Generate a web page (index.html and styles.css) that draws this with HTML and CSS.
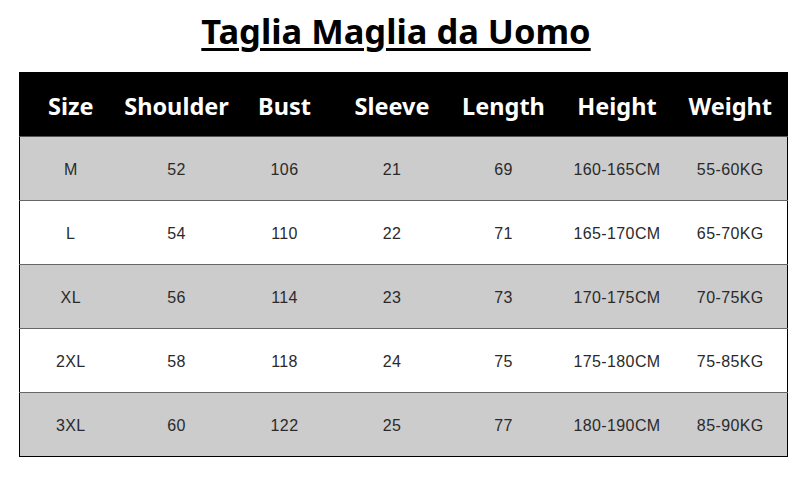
FILE: index.html
```html
<!DOCTYPE html>
<html>
<head>
<meta charset="utf-8">
<link rel="stylesheet" href="styles.css">
</head>
<body>
<h1 class="title">Taglia Maglia da Uomo</h1>
<table class="size-table">
  <colgroup>
    <col class="c1"><col class="c2"><col class="c3"><col class="c4"><col class="c5"><col class="c6"><col class="c7">
  </colgroup>
  <thead>
    <tr><th>Size</th><th>Shoulder</th><th>Bust</th><th>Sleeve</th><th>Length</th><th>Height</th><th>Weight</th></tr>
  </thead>
  <tbody>
    <tr class="gray"><td>M</td><td>52</td><td>106</td><td>21</td><td>69</td><td>160-165CM</td><td>55-60KG</td></tr>
    <tr><td>L</td><td>54</td><td>110</td><td>22</td><td>71</td><td>165-170CM</td><td>65-70KG</td></tr>
    <tr class="gray"><td>XL</td><td>56</td><td>114</td><td>23</td><td>73</td><td>170-175CM</td><td>70-75KG</td></tr>
    <tr><td>2XL</td><td>58</td><td>118</td><td>24</td><td>75</td><td>175-180CM</td><td>75-85KG</td></tr>
    <tr class="gray"><td>3XL</td><td>60</td><td>122</td><td>25</td><td>77</td><td>180-190CM</td><td>85-90KG</td></tr>
  </tbody>
</table>
</body>
</html>
```
FILE: styles.css
```css
html, body {
  margin: 0;
  padding: 0;
  background: #ffffff;
}
body {
  padding: 8px 19px 0 19px;
  width: 768px;
}
.title {
  margin: 0;
  padding-right: 14px;
  height: 64px;
  text-align: center;
  font-family: "Noto Sans", "Open Sans", sans-serif;
  font-weight: 700;
  font-size: 34.5px;
  line-height: 46px;
  color: #000;
  text-decoration: underline;
  text-decoration-thickness: 3px;
  text-underline-offset: 4px;
}
.size-table {
  width: 768px;
  border-collapse: collapse;
  table-layout: fixed;
  border-left: 1px solid #000;
  border-right: 1px solid #000;
  border-bottom: 1px solid #000;
}
.c1 { width: 102px; }
.c2 { width: 110px; }
.c3 { width: 106px; }
.c4 { width: 109px; }
.c5 { width: 114px; }
.c6 { width: 113px; }
.c7 { width: 114px; }
.size-table th {
  background: #000;
  color: #fff;
  height: 61px;
  padding: 3px 0 0 0;
  font-family: "Noto Sans", "Open Sans", sans-serif;
  font-weight: 700;
  font-size: 23.5px;
  text-align: center;
  vertical-align: middle;
  border-bottom: 1px solid #555;
}
.size-table td {
  height: 60px;
  padding: 3px 0 0 0;
  text-align: center;
  vertical-align: middle;
  font-family: "Liberation Sans", Arial, sans-serif;
  font-size: 16px;
  letter-spacing: 0.4px;
  color: #2a2a2a;
  border-bottom: 1px solid #666;
}
.size-table tr.gray td {
  background: #cccccc;
}
.size-table tbody tr:last-child td {
  border-bottom: 1px solid #000;
}
```
